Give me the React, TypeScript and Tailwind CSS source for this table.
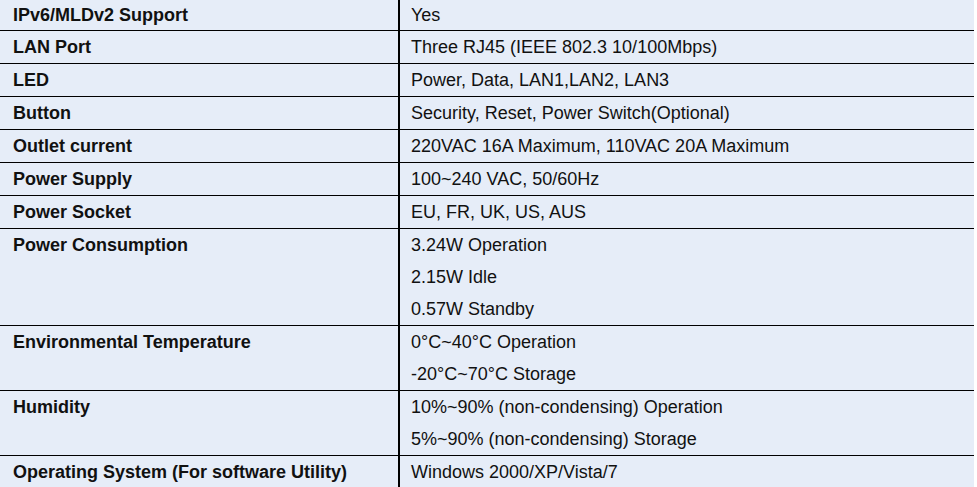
const rows: { label: string; values: string[] }[] = [
  { label: 'IPv6/MLDv2 Support', values: ['Yes'] },
  { label: 'LAN Port', values: ['Three RJ45 (IEEE 802.3 10/100Mbps)'] },
  { label: 'LED', values: ['Power, Data, LAN1,LAN2, LAN3'] },
  { label: 'Button', values: ['Security, Reset, Power Switch(Optional)'] },
  { label: 'Outlet current', values: ['220VAC 16A Maximum, 110VAC 20A Maximum'] },
  { label: 'Power Supply', values: ['100~240 VAC, 50/60Hz'] },
  { label: 'Power Socket', values: ['EU, FR, UK, US, AUS'] },
  { label: 'Power Consumption', values: ['3.24W Operation', '2.15W Idle', '0.57W Standby'] },
  { label: 'Environmental Temperature', values: ['0°C~40°C Operation', '-20°C~70°C Storage'] },
  { label: 'Humidity', values: ['10%~90% (non-condensing) Operation', '5%~90% (non-condensing) Storage'] },
  { label: 'Operating System (For software Utility)', values: ['Windows 2000/XP/Vista/7'] },
];

export default function App() {
  return (
    <div className="w-[977px] h-[487px] overflow-hidden bg-white text-[18px] text-[#111]" style={{ fontFamily: '"Liberation Sans", Arial, sans-serif' }}>
      <div className="w-[974px] bg-[#e6edf8]">
        {rows.map((row, i) => {
          const first = i === 0;
          const last = i === rows.length - 1;
          return (
            <div
              key={row.label}
              className={`flex ${last ? '' : 'border-b border-black'} ${first ? 'leading-[30px]' : 'leading-[32px]'}`}
            >
              <div className="w-[398px] shrink-0 pl-[13px] font-bold">{row.label}</div>
              <div className="w-[2px] shrink-0 bg-black" />
              <div className="flex-1 pl-[11px]">
                {row.values.map((v) => (
                  <div key={v}>{v}</div>
                ))}
              </div>
            </div>
          );
        })}
      </div>
    </div>
  );
}
